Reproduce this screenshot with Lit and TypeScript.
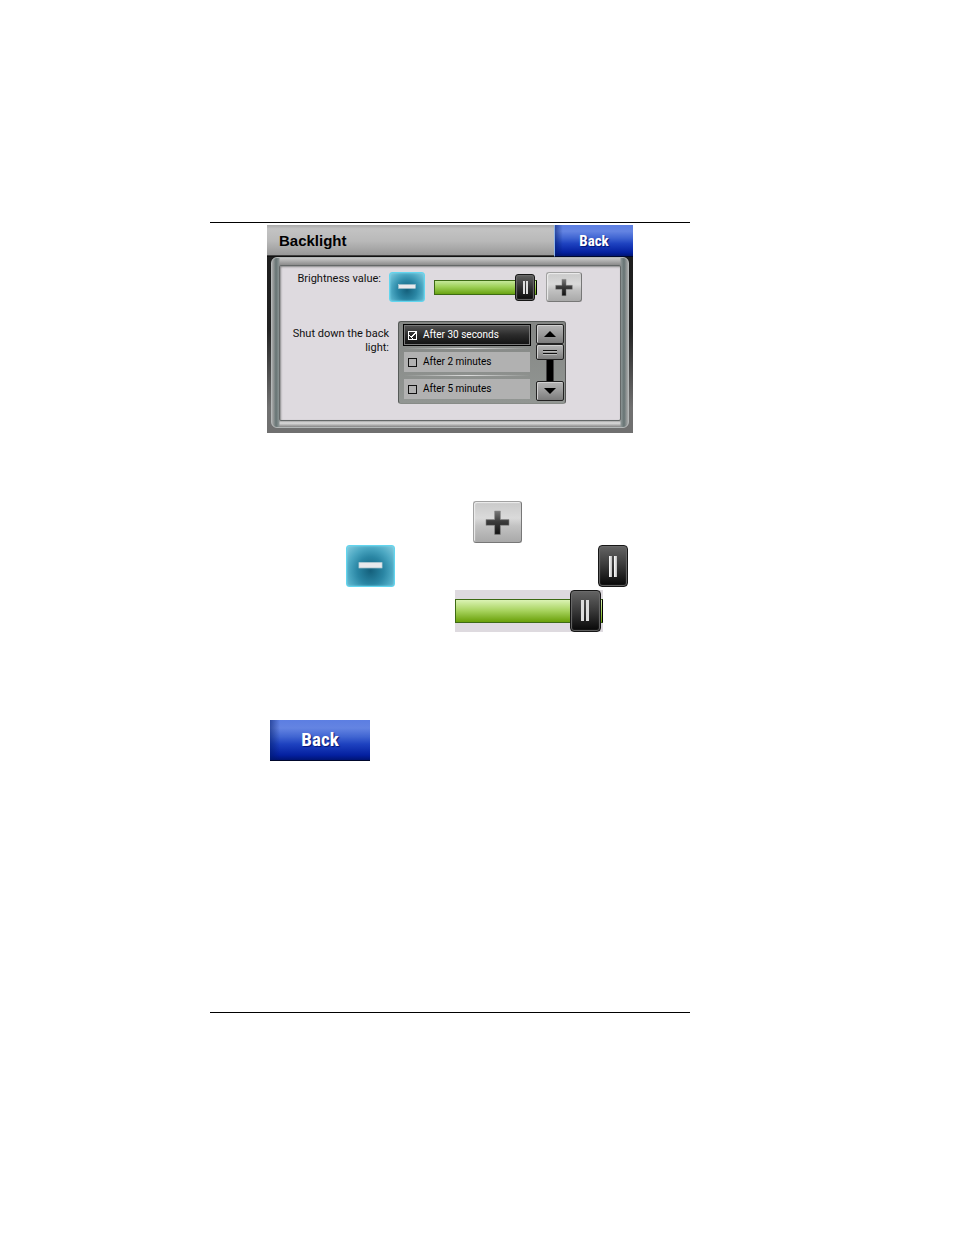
import { LitElement, html, css, svg } from "lit";
import { customElement, state } from "lit/decorators.js";

const plusIcon = svg`
  <svg viewBox="0 0 49 42" preserveAspectRatio="none" aria-hidden="true">
    <defs>
      <linearGradient id="ink" x1="0" y1="0" x2="0" y2="1">
        <stop offset="0" stop-color="#777" />
        <stop offset="0.45" stop-color="#3c3c3c" />
        <stop offset="1" stop-color="#111" />
      </linearGradient>
    </defs>
    <path d="M21.5 9.5h6v9h9v6h-9v9.5h-6v-9.5h-9v-6h9z" fill="url(#ink)" stroke="#8a8a8a" stroke-width="0.6" />
  </svg>`;

const minusIcon = svg`
  <svg viewBox="0 0 49 42" preserveAspectRatio="none" aria-hidden="true">
    <rect x="12.5" y="17.5" width="24" height="5.5" fill="#e9e9ec" stroke="#c2d3da" stroke-width="0.8" />
  </svg>`;

@customElement("app-root")
export class AppRoot extends LitElement {
  @state() private level = 99;
  @state() private delay = 0;

  private readonly delays = ["After 30 seconds", "After 2 minutes", "After 5 minutes"];

  static styles = css`
    :host {
      display: block;
      box-sizing: border-box;
      padding: 222px 264px 222px 210px;
      background: #fff;
      color: #000;
      font-family: Roboto, "Open Sans", sans-serif;
    }
    * { box-sizing: border-box; }
    button, input { margin: 0; padding: 0; border: 0; font: inherit; }
    svg { display: block; width: 100%; height: 100%; }

    .page { border-top: 1px solid #000; border-bottom: 1px solid #000; padding: 2px 0 251px; }

    .device { margin: 0 57px; background: linear-gradient(#1c1c1c, #222 50%, #707070 88%, #707070); }
    .bar {
      display: flex;
      height: 32px;
      justify-content: space-between;
      background: linear-gradient(#a9a9a9, #c3c3c3 12%, #b9b9b9 50%, #989898 94%, #111 96%);
    }
    h1 { margin: 0; padding-left: 12px; font: bold 15px/31px "Liberation Sans", sans-serif; }

    .back {
      width: 79px;
      height: 32px;
      border-left: 1px solid #8fb4e8;
      border-bottom: 1px solid #00082c;
      color: #fff;
      font: bold 15px/30px "Roboto Condensed", "Liberation Sans", sans-serif;
      background: linear-gradient(90deg, #001a6888, transparent 10%),
        linear-gradient(#5c7ee2, #6484e2 20%, #4065d2 42%, #1e42c0 60%, #0420a0 88%, #001474);
      text-shadow: 1px 1px 1px #001474;
    }
    .back.large { width: 100px; height: 41px; border-left: 0; font-size: 19px; line-height: 38px; }

    .bezel { margin: 0 4px; padding-bottom: 5px; }
    .frame {
      border-radius: 6px;
      border: 1px solid #b4b8b8;
      padding: 7px 7px 6px;
      background: linear-gradient(90deg, #aaa 0, #667373 4px, #8b9494 7px, transparent 8px, transparent calc(100% - 8px), #8b9494 calc(100% - 7px), #667373 calc(100% - 4px), #aaa),
        linear-gradient(#c8c8c8, #8b8b8b 7px, #8b8b8b calc(100% - 7px), #dcdcdc calc(100% - 4px), #858585);
    }
    .panel {
      display: grid;
      grid-template-columns: 109px minmax(0, 1fr);
      padding: 6px 38px 16px 0;
      border: 1px solid #646868;
      border-radius: 2px;
      background: #dedadf;
      box-shadow: inset 1px 1px 2px #888;
    }
    .caption { font-size: 11px; line-height: 14px; text-align: right; color: #111; }
    .brightness { padding-right: 8px; }
    .shutdown { padding-top: 25px; }

    .adjust { display: flex; align-items: center; gap: 9px; }

    .key { width: 36px; height: 30px; border-radius: 3px; flex: none; }
    .key.large { width: 49px; height: 42px; }
    .minus {
      border: 1px solid #62d5ee;
      background: radial-gradient(ellipse at 50% 62%, #14607c, #2a86a4 40%, #4aa6c1 65%, #7cc6da 95%);
      box-shadow: inset 0 0 2px #79e1f5;
    }
    .plus {
      border: 1px solid #a2a2a2;
      border-right-color: #777;
      border-bottom-color: #777;
      background: linear-gradient(#c9c9c9, #dadada 40%, #c2c2c2 60%, #a9a9a9);
      box-shadow: inset 1px 1px 1px #eee;
    }

    input[type="range"] {
      appearance: none;
      flex: 1;
      min-width: 0;
      height: 28px;
      background: transparent;
    }
    input[type="range"].large { flex: none; width: 148px; height: 42px; background: #dedadf; }
    input[type="range"]::-webkit-slider-runnable-track {
      height: 15px;
      border: 1px solid #3d6a14;
      border-right: 1px solid #000;
      background: linear-gradient(#c5e89a, #9ed057 45%, #69a312);
    }
    input[type="range"].large::-webkit-slider-runnable-track {
      height: 24px;
      background: linear-gradient(#dbf3b4, #a6d25c 50%, #69a008);
    }
    input[type="range"]::-webkit-slider-thumb {
      appearance: none;
      width: 20px;
      height: 27px;
      margin-top: -7px;
      border: 1px solid #161616;
      border-radius: 3px;
      box-shadow: inset 0 0 1px 1px #6b6b6b;
      background:
        linear-gradient(#ddd, #ddd) 7px 6px / 2px 13px no-repeat,
        linear-gradient(#ddd, #ddd) 10px 6px / 2px 13px no-repeat,
        linear-gradient(#606060, #303030 50%, #0a0a0a);
    }
    input[type="range"].large::-webkit-slider-thumb {
      width: 31px;
      height: 42px;
      margin-top: -10px;
      border-radius: 4px;
      background:
        linear-gradient(#ddd, #ddd) 10px 9px / 3px 21px no-repeat,
        linear-gradient(#ddd, #ddd) 15px 9px / 3px 21px no-repeat,
        linear-gradient(#646464, #3a3a3a 48%, #060606);
    }

    .list {
      display: flex;
      gap: 6px;
      width: 168px;
      height: 83px;
      margin: 19px 0 0 9px;
      padding: 2px 1px 2px 5px;
      border: 1px solid #565a58;
      border-right-color: #555;
      border-bottom-color: #888c88;
      border-radius: 3px;
      background: linear-gradient(#848684, #929693);
    }
    .options { flex: 1; display: flex; flex-direction: column; padding-top: 1px; }
    .option {
      display: flex;
      align-items: center;
      height: 20px;
      gap: 6px;
      padding-left: 4px;
      font-size: 10px;
      line-height: 20px;
      background: #b1b1b1;
      white-space: nowrap;
    }
    .option.on {
      color: #fff;
      background: linear-gradient(#555, #2b2b2b 50%, #111);
      box-shadow: 0 0 0 1px #000, inset 0 0 0 1px #777;
    }
    .divider {
      height: 1px;
      margin: 3px 0;
      background: linear-gradient(90deg, transparent, #ddd 50%, transparent);
    }
    input[type="checkbox"] {
      appearance: none;
      width: 9px;
      height: 9px;
      border: 1px solid #111;
      flex: none;
    }
    input[type="checkbox"]:checked {
      border-color: #fff;
      background:
        linear-gradient(45deg, transparent 45%, #fff 45%, #fff 58%, transparent 58%) 0 3px / 4px 4px no-repeat,
        linear-gradient(-45deg, transparent 42%, #fff 42%, #fff 58%, transparent 58%) 2px 0 / 5px 6px no-repeat;
    }

    .scroll { display: flex; flex-direction: column; align-items: center; width: 28px; }
    .step {
      width: 28px;
      height: 20px;
      flex: none;
      border: 1px solid #222;
      border-radius: 2px;
      background: linear-gradient(#b5b5b5, #9b9b9b 50%, #7c7c7c);
      box-shadow: inset 1px 1px 0 #d0d0d0;
    }
    .grip { height: 16px; }
    .rail { flex: 1; width: 8px; background: #000; border-left: 1px solid #444; border-right: 1px solid #444; }

    .legend { display: flex; flex-direction: column; padding-top: 68px; gap: 2px; }
    .legend div { display: flex; }
    .row-plus { padding-left: 263px; }
    .row-pair { padding: 0 62px 0 136px; justify-content: space-between; }
    .row-slider { padding: 1px 0 0 245px; }
    .row-back { padding: 86px 0 0 60px; }
    .thumb {
      width: 30px;
      height: 42px;
      display: flex;
      justify-content: center;
      align-items: center;
      gap: 2px;
      border: 1px solid #161616;
      border-radius: 4px;
      background: linear-gradient(#646464, #3a3a3a 48%, #060606);
      box-shadow: inset 0 0 1px 1px #6b6b6b;
    }
    .thumb i { width: 3px; height: 21px; background: linear-gradient(90deg, #fff, #bbb); }
  `;

  private nudge(step: number) {
    this.level = Math.min(100, Math.max(0, this.level + step));
  }

  private setLevel(e: Event) {
    this.level = Number((e.target as HTMLInputElement).value);
  }

  private minus(size = "") {
    return html`<button class="key minus ${size}" aria-label="Decrease brightness" @click=${() => this.nudge(-10)}>${minusIcon}</button>`;
  }

  private plus(size = "") {
    return html`<button class="key plus ${size}" aria-label="Increase brightness" @click=${() => this.nudge(10)}>${plusIcon}</button>`;
  }

  private slider(id: string, size = "") {
    return html`<input id=${id} class=${size} type="range" min="0" max="100" aria-label="Brightness value" .value=${String(this.level)} @input=${this.setLevel} />`;
  }

  private option(label: string, i: number) {
    return html`
      ${i ? html`<div class="divider"></div>` : ""}
      <label class="option ${this.delay === i ? "on" : ""}">
        <input type="checkbox" .checked=${this.delay === i} @change=${() => (this.delay = i)} />${label}
      </label>`;
  }

  render() {
    return html`
      <main class="page">
        <section class="device">
          <header class="bar">
            <h1>Backlight</h1>
            <button class="back">Back</button>
          </header>
          <div class="bezel">
            <div class="frame">
              <div class="panel">
                <label class="caption brightness" for="level">Brightness value:</label>
                <div class="adjust">${this.minus()}${this.slider("level")}${this.plus()}</div>
                <div class="caption shutdown">Shut down the back light:</div>
                <div class="list" role="group" aria-label="Shut down the back light">
                  <div class="options">${this.delays.map((d, i) => this.option(d, i))}</div>
                  <div class="scroll">
                    <button class="step" aria-label="Scroll up">
                      <svg viewBox="0 0 26 18"><path d="M7 12l6-6 6 6z" /></svg>
                    </button>
                    <button class="step grip" aria-label="Scroll position">
                      <svg viewBox="0 0 26 14"><path d="M6 5.5h14M6 8.5h14" stroke="#111" /><path d="M6 6.5h14M6 9.5h14" stroke="#bbb" /></svg>
                    </button>
                    <div class="rail"></div>
                    <button class="step" aria-label="Scroll down">
                      <svg viewBox="0 0 26 18"><path d="M7 6l6 6 6-6z" /></svg>
                    </button>
                  </div>
                </div>
              </div>
            </div>
          </div>
        </section>
        <section class="legend">
          <div class="row-plus">${this.plus("large")}</div>
          <div class="row-pair">
            ${this.minus("large")}
            <button class="thumb" aria-label="Slider handle"><i></i><i></i></button>
          </div>
          <div class="row-slider">${this.slider("level-large", "large")}</div>
          <div class="row-back"><button class="back large">Back</button></div>
        </section>
      </main>
    `;
  }
}
